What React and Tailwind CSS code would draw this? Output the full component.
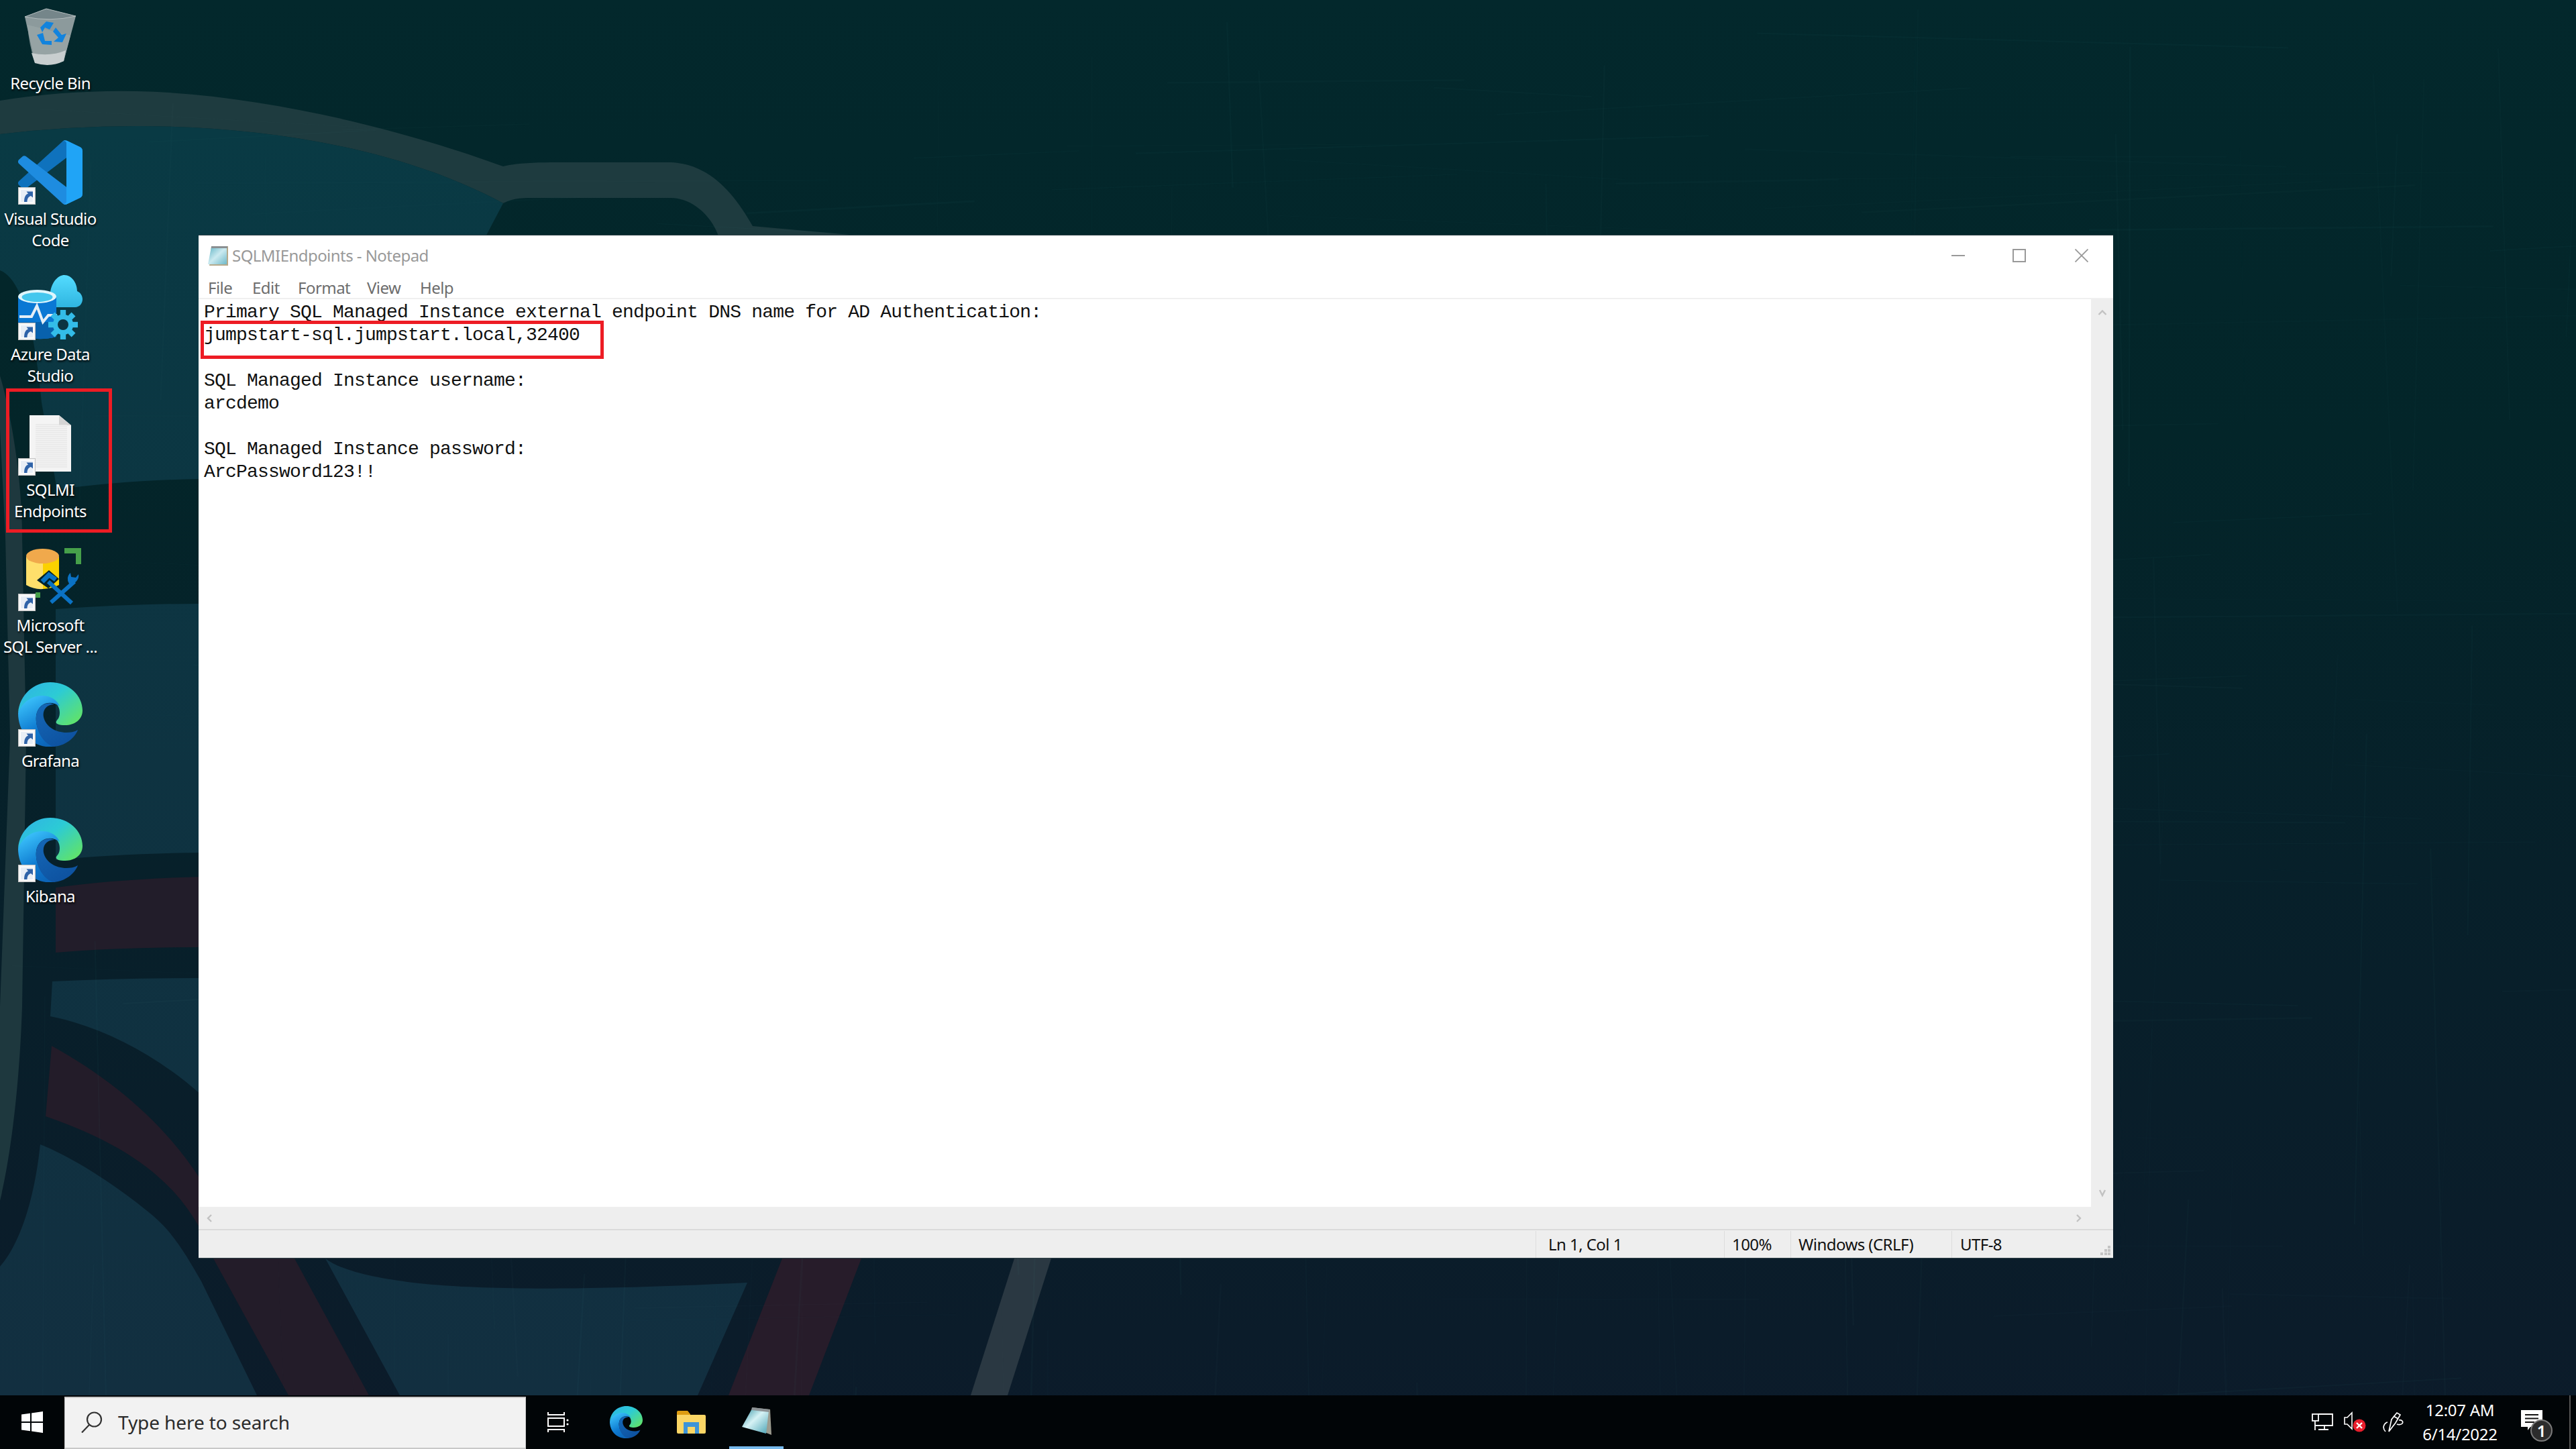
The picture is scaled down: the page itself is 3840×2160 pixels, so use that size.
import React from "react";

const UI_FONT = "font-['Noto_Sans',sans-serif]";

// faint scratchy grid of the wallpaper
const seeded = (seed) => () => {
  seed = (seed * 16807) % 2147483647;
  return seed / 2147483647;
};
const rnd = seeded(4711);
const scratches = Array.from({ length: 220 }, (_, i) => {
  const x = rnd() * 3840;
  const y = rnd() * 2080;
  const len = 200 + rnd() * 800;
  const tilt = (rnd() - 0.5) * 0.12;
  const vertical = i % 2 === 0;
  return {
    x1: x,
    y1: y,
    x2: vertical ? x + tilt * len : x + len,
    y2: vertical ? y + len : y + tilt * len,
    o: 0.012 + rnd() * 0.022,
    w: 1 + rnd() * 2,
  };
});

const Wallpaper = () => (
  <svg className="absolute inset-0" width="3840" height="2160" viewBox="0 0 3840 2160">
    <defs>
      <linearGradient id="wpBase" x1="0" y1="0" x2="0" y2="1">
        <stop offset="0" stopColor="#03282c" />
        <stop offset="0.3" stopColor="#032529" />
        <stop offset="0.6" stopColor="#07202a" />
        <stop offset="1" stopColor="#0c1b2a" />
      </linearGradient>
      <linearGradient id="wpTeal" gradientUnits="userSpaceOnUse" x1="0" y1="200" x2="0" y2="2080">
        <stop offset="0" stopColor="#093a44" />
        <stop offset="0.5" stopColor="#0e3341" />
        <stop offset="1" stopColor="#122f40" />
      </linearGradient>
    </defs>
    <rect width="3840" height="2160" fill="url(#wpBase)" />
    {/* arc band at the top left */}
    <path
      d="M0 150 Q100 134 204 136 C400 140 620 200 750 248 C770 243 800 242 830 242 L1000 242 C1060 245 1095 290 1122 337 L1290 352 L1071 352 C1060 320 1030 295 1000 295 L790 295 C770 295 760 298 750 303 C600 222 400 188 204 188 Q100 188 0 200 Z"
      fill="#1e3b3f"
    />
    {/* teal panels */}
    <path
      d="M0 200 Q100 188 204 188 C400 188 600 222 750 303 L720 360 L720 700 L296 714 Q180 716 85 730 L62 600 Q45 420 0 403 Z"
      fill="url(#wpTeal)"
    />
    <path d="M83 908 Q200 900 300 900 L300 1271 Q180 1272 83 1282 Z" fill="url(#wpTeal)" />
    <path
      d="M78 1463 Q180 1458 300 1458 L300 1632 C230 1570 150 1530 75 1515 Z"
      fill="url(#wpTeal)"
    />
    <path
      d="M60 1706 C120 1730 190 1780 230 1814 C260 1840 280 1875 300 1910 L383 2080 L0 2080 L0 1888 C25 1860 50 1800 60 1706 Z"
      fill="url(#wpTeal)"
    />
    <path
      d="M485 1876 C510 1895 560 1905 615 1912 C700 1922 850 1925 1114 1912 L1040 2080 L596 2080 Z"
      fill="url(#wpTeal)"
    />
    {/* maroon ribbons */}
    <path d="M83 1323 Q180 1310 300 1307 L300 1412 Q180 1412 83 1420 Z" fill="#221d2a" />
    <path
      d="M77 1559 C170 1610 250 1680 300 1760 L439 1876 L550 2080 L430 2080 L318 1876 C280 1770 200 1710 68 1664 Z"
      fill="#231c29"
    />
    <path d="M1166 1876 L1284 1876 L1206 2080 L1086 2080 Z" fill="#271c2a" />
    {/* grey stripes */}
    <path
      d="M0 560 C12 600 33 700 33 800 L39 1100 L33 1500 C28 1650 10 1750 0 1790 L0 1500 L15 1100 L8 800 L0 640 Z"
      fill="#1e383e"
    />
    <path d="M1512 1876 L1567 1876 L1502 2080 L1447 2080 Z" fill="#2a3842" />
    {scratches.map((s, i) => (
      <line
        key={i}
        x1={s.x1}
        y1={s.y1}
        x2={s.x2}
        y2={s.y2}
        stroke="#6fb0b0"
        strokeOpacity={s.o}
        strokeWidth={s.w}
      />
    ))}
  </svg>
);

const ShortcutArrow = () => (
  <svg className="absolute left-0 bottom-0" width="26" height="26" viewBox="0 0 26 26">
    <rect x="0.5" y="0.5" width="25" height="25" fill="#f4f4f4" stroke="#c4c4c4" />
    <rect x="3" y="3" width="20" height="20" fill="#fff" />
    <path d="M4 4H22V22H4Z" fill="#e8eef6" />
    <path
      d="M9 22C9 15 11 11 15 9.5L12.5 6.5H22V15.5L19 13C15.5 14 13.5 17 13.5 22Z"
      fill="#2f63a8"
    />
  </svg>
);

const RecycleBin = () => (
  <svg width="96" height="96" viewBox="0 0 96 96">
    <path d="M10 18 L42 6 L86 17 L68 84 Q50 92 25 86 Z" fill="#8c9a9c" />
    <path d="M10 18 L42 6 L86 17 Q48 26 10 18 Z" fill="#75868a" stroke="#b3bcbd" strokeWidth="1" />
    <path d="M14 30 Q16 60 25 86 Q50 92 68 84 L78 46 Z" fill="#9aa7a8" opacity="0.7" />
    <path d="M20 72 Q48 78 71 68 L68 84 Q48 94 25 87 Z" fill="#c8cecf" />
    <g fill="#1283dd">
      <path d="M33 34 L42 25 L53 27 L47 37 L40 34 L36 41 Z" />
      <path d="M28 45 L37 42 L40 54 L50 54 L50 60 L36 59 Z" />
      <path d="M56 34 L65 45 L72 43 L66 56 L53 55 L60 49 L52 40 Z" />
    </g>
  </svg>
);

const VSCode = () => (
  <svg width="96" height="96" viewBox="0 0 100 100">
    <path
      d="M96.4614 10.7962L75.8569 0.875542C73.4719 -0.272773 70.6217 0.211611 68.75 2.08333L1.29858 63.5832C-0.515693 65.2373 -0.513607 68.0937 1.30308 69.7452L6.81272 74.754C8.29793 76.1042 10.5347 76.2036 12.1338 74.9905L93.3609 13.3699C96.086 11.3026 100 13.2462 100 16.6667V16.4275C100 14.0265 98.6246 11.8378 96.4614 10.7962Z"
      fill="#0f72bd"
    />
    <path
      d="M96.4614 89.2038L75.8569 99.1245C73.4719 100.273 70.6217 99.7884 68.75 97.9167L1.29858 36.4168C-0.515693 34.7627 -0.513607 31.9063 1.30308 30.2548L6.81272 25.246C8.29793 23.8958 10.5347 23.7964 12.1338 25.0095L93.3609 86.6301C96.086 88.6974 100 86.7538 100 83.3333V83.5725C100 85.9735 98.6246 88.1622 96.4614 89.2038Z"
      fill="#1e8ce0"
    />
    <path
      d="M75.8578 99.1263C73.4721 100.274 70.6219 99.7885 68.75 97.9166C71.0564 100.223 75 98.5895 75 95.3278V4.67213C75 1.41039 71.0564 -0.223106 68.75 2.08329C70.6219 0.211402 73.4721 -0.273666 75.8578 0.873633L96.4587 10.7807C98.6234 11.8217 100 14.0112 100 16.4132V83.5871C100 85.9891 98.6234 88.1786 96.4586 89.2196L75.8578 99.1263Z"
      fill="#20a4f6"
    />
  </svg>
);

const Gear = ({ cx, cy, r, fill }) => (
  <g fill={fill}>
    {[0, 45, 90, 135, 180, 225, 270, 315].map((a) => (
      <rect
        key={a}
        x={cx - r * 0.22}
        y={cy - r - 3}
        width={r * 0.44}
        height={r * 0.5}
        transform={`rotate(${a} ${cx} ${cy})`}
      />
    ))}
    <circle cx={cx} cy={cy} r={r * 0.8} />
  </g>
);

const AzureData = () => (
  <svg width="96" height="97" viewBox="0 0 96 97">
    <defs>
      <linearGradient id="adsCloud" x1="0" y1="0" x2="0" y2="1">
        <stop offset="0" stopColor="#54dcff" />
        <stop offset="1" stopColor="#2fb5e0" />
      </linearGradient>
    </defs>
    <g fill="url(#adsCloud)">
      <path d="M34 48 C33 36 40 28 48 26 C50 10 60 0 69 0 C80 0 88 12 88 24 C93 26 96 31 96 36 C96 43 91 48 85 48 Z" />
    </g>
    <path d="M0 32 V88 Q25 100 57 92 V32 Z" fill="#0a78d4" />
    <path d="M0 88 Q25 100 57 92 V70 L0 70 Z" fill="#0861ad" />
    <ellipse cx="28.5" cy="32" rx="28.5" ry="10" fill="#dff6fd" />
    <ellipse cx="28.5" cy="33" rx="23" ry="7" fill="#45c7ee" />
    <path
      d="M2 62 L20 62 L28 46 L37 70 L45 60 L58 60"
      fill="none"
      stroke="#e4eef6"
      strokeWidth="4"
    />
    <Gear cx={67} cy={74} r={19} fill="#33bce8" />
    <circle cx="67" cy="74" r="8" fill="#0b3442" />
  </svg>
);

const TextDoc = () => (
  <svg width="62" height="84" viewBox="0 0 62 84">
    <path d="M0 0 H44 L62 15 V84 H0 Z" fill="#f4f4f4" />
    <path d="M44 0 L62 15 H44 Z" fill="#d4d4d4" />
    {Array.from({ length: 22 }, (_, i) => (
      <line key={i} x1="9" x2="56" y1={14 + i * 3} y2={14 + i * 3} stroke="#e0e0e0" strokeWidth="1" />
    ))}
  </svg>
);

const SsmsIcon = () => (
  <svg width="82" height="86" viewBox="0 0 82 86">
    <path d="M57 0 H82 V24 H74 V8 H57 Z" fill="#46a04a" />
    <path d="M0 13 V55 Q12 62 25 61 V13 Z" fill="#ffdf6b" />
    <path d="M25 13 V61 Q40 60 49 55 V13 Z" fill="#fbd100" />
    <ellipse cx="24.5" cy="12" rx="24.5" ry="11" fill="#f0a94c" />
    <path d="M24 67 V75 H17 V67 Z" fill="#46a04a" transform="translate(-3 -1)" />
    <path d="M16 48 L34 33 L49 46 L38 56 L33 60 Z" fill="#04222a" />
    <g stroke="#0b72c4" strokeWidth="6" fill="none">
      <path d="M37 81 L72 50" />
      <path d="M68 82 L33 50" />
      <path d="M24 50 L34 40 L44 47" strokeWidth="7" />
    </g>
    <path d="M64 53 A12 12 0 0 1 66 37 L67 43 L74 44 L78 39 A12 12 0 0 1 64 53 Z" fill="#0b72c4" />
  </svg>
);

const EdgeIcon = ({ size = 96, id = "e", height }) => (
  <svg width={size} height={height || size} viewBox="0 0 96 96" preserveAspectRatio="none">
    <defs>
      <linearGradient id={`${id}Top`} x1="0" y1="0" x2="1" y2="0.8">
        <stop offset="0" stopColor="#2fb1e6" />
        <stop offset="0.5" stopColor="#2ccbd5" />
        <stop offset="1" stopColor="#5fe26c" />
      </linearGradient>
      <linearGradient id={`${id}Left`} x1="0.2" y1="0.1" x2="0.6" y2="1">
        <stop offset="0" stopColor="#38bdf8" />
        <stop offset="0.6" stopColor="#0e7ad0" />
        <stop offset="1" stopColor="#0c65b8" />
      </linearGradient>
      <linearGradient id={`${id}Wave`} x1="0.2" y1="0" x2="0.8" y2="1">
        <stop offset="0" stopColor="#1466b5" />
        <stop offset="1" stopColor="#0d509e" />
      </linearGradient>
    </defs>
    <path
      d="M0 46 C2 18 24 0 48 0 C76 0 96 20 96 42 C96 56 84 64 70 64 C61 64 55 62 57 58 C59 55 62 53 62 45 C62 32 50 24 36 24 C20 24 6 32 0 46 Z"
      fill={`url(#${id}Top)`}
    />
    <path
      d="M0 46 C6 30 20 20 36 20 C48 20 58 26 62 36 C52 27 30 28 27 50 C25 68 36 88 56 96 C24 100 0 78 0 46 Z"
      fill={`url(#${id}Left)`}
    />
    <path
      d="M27 50 C29 33 44 28 54 33 C44 33 36 40 38 52 C41 66 56 75 72 75 C78 75 84 74 89 71 C84 84 70 95 52 96 C36 90 25 70 27 50 Z"
      fill={`url(#${id}Wave)`}
    />
  </svg>
);

const desktopIcons = [
  { label: ["Recycle Bin"], art: <RecycleBin />, shortcut: false, box: "items-center justify-center" },
  { label: ["Visual Studio", "Code"], art: <VSCode />, shortcut: true, box: "items-center justify-center" },
  { label: ["Azure Data", "Studio"], art: <AzureData />, shortcut: true, box: "items-end justify-center" },
  { label: ["SQLMI", "Endpoints"], art: <TextDoc />, shortcut: true, box: "items-center justify-center" },
  { label: ["Microsoft", "SQL Server ..."], art: <SsmsIcon />, shortcut: true, box: "items-center justify-center pl-[10px] pb-[6px]" },
  { label: ["Grafana"], art: <EdgeIcon id="graf" />, shortcut: true, box: "items-center justify-center" },
  { label: ["Kibana"], art: <EdgeIcon id="kib" />, shortcut: true, box: "items-center justify-center" },
];

const DesktopIcon = ({ item }) => (
  <div className="h-[202px] w-[150px] pt-[7px] flex flex-col items-center">
    <div className={`relative w-24 h-24 flex shrink-0 ${item.box}`}>
      {item.art}
      {item.shortcut && <ShortcutArrow />}
    </div>
    <div className="mt-[5px] text-white text-[24px] leading-[32px] tracking-[-0.6px] text-center whitespace-nowrap [text-shadow:1px_2px_3px_rgba(0,0,0,0.95)]">
      {item.label.map((l) => (
        <div key={l}>{l}</div>
      ))}
    </div>
  </div>
);

const NotepadGlyph = ({ w, h, id }) => (
  <svg width={w} height={h} viewBox="0 0 32 32">
    <defs>
      <linearGradient id={id} x1="0" y1="0" x2="1" y2="1">
        <stop offset="0" stopColor="#5fb3c4" />
        <stop offset="0.5" stopColor="#cbeaf0" />
        <stop offset="1" stopColor="#6eb8c8" />
      </linearGradient>
    </defs>
    <path d="M6 2 H31 V31 H3 Z" fill="#b6a98a" />
    <path d="M6 3 H29 V29 H1 Z" fill={`url(#${id})`} />
    <path d="M6 2 H30 V5 H6 Z" fill="#8a8f92" />
  </svg>
);

const menuItems = [
  ["File", "w-[66px]"],
  ["Edit", "w-[68px]"],
  ["Format", "w-[103px]"],
  ["View", "w-[79px]"],
  ["Help", ""],
];

const lines = [
  "Primary SQL Managed Instance external endpoint DNS name for AD Authentication:",
  "jumpstart-sql.jumpstart.local,32400",
  "",
  "SQL Managed Instance username:",
  "arcdemo",
  "",
  "SQL Managed Instance password:",
  "ArcPassword123!!",
];

const statusCells = [
  ["Ln 1, Col 1", "w-[281px] pl-[18px]"],
  ["100%", "w-[99px] pl-[11px]"],
  ["Windows (CRLF)", "w-[240px] pl-[11px]"],
  ["UTF-8", "w-[241px] pl-[12px]"],
];

const Chevron = ({ d }) => (
  <svg width="14" height="14" viewBox="0 0 14 14" className="shrink-0">
    <path d={d} fill="none" stroke="#c2c2c2" strokeWidth="2.4" />
  </svg>
);

const NotepadWindow = () => (
  <div className="absolute left-[296px] top-[350px] w-[2854px] h-[1526px] flex flex-col bg-white border-t border-b border-[#2f4046]">
    <div className="h-[63px] pb-[4px] flex items-center shrink-0">
      <div className="ml-[13px] w-[37px]">
        <NotepadGlyph w={32} h={32} id="titleNote" />
      </div>
      <span className="text-[24px] text-[#999999] tracking-[-0.55px]">SQLMIEndpoints - Notepad</span>
      <div className="ml-auto flex items-center h-full text-[#999999]">
        <svg width="20" height="20" viewBox="0 0 20 20" className="mr-[71px]">
          <rect y="9" width="20" height="2" fill="#999999" />
        </svg>
        <svg width="20" height="20" viewBox="0 0 20 20" className="mr-[73px]">
          <rect x="1" y="1" width="18" height="18" fill="none" stroke="#999999" strokeWidth="2" />
        </svg>
        <svg width="20" height="20" viewBox="0 0 20 20" className="mr-[37px]">
          <path d="M0.5 0.5L19.5 19.5M19.5 0.5L0.5 19.5" stroke="#999999" strokeWidth="1.8" />
        </svg>
      </div>
    </div>
    <div className="h-[30px] flex items-center pl-[14px] text-[24px] text-[#6d6d6d] tracking-[-0.55px] shrink-0">
      {menuItems.map(([label, width]) => (
        <span key={label} className={width}>
          {label}
        </span>
      ))}
    </div>
    <div className="h-[2px] bg-[#f0f0f0] shrink-0" />
    <div className="flex flex-1 min-h-0 pt-0">
      <div className="flex-1 bg-white pt-[3px] pl-2 font-['Liberation_Mono',monospace] text-[28px] leading-[34px] tracking-[-0.8px] text-[#111111] whitespace-pre">
        {lines.map((l, i) => (
          <div key={i} className="h-[34px]">
            {l}
          </div>
        ))}
      </div>
      <div className="w-[33px] bg-[#eeeeee] flex flex-col items-center justify-between py-[13px]">
        <Chevron d="M1.5 10L7 4.5L12.5 10" />
        <Chevron d="M3 2L7 10L11 2" />
      </div>
    </div>
    <div className="h-[33px] bg-[#eeeeee] flex items-center justify-between px-[10px] pr-[45px] shrink-0">
      <Chevron d="M9 2L4 7L9 12" />
      <Chevron d="M5 2L10 7L5 12" />
    </div>
    <div className="h-[43px] bg-[#eeeeee] border-t-2 border-[#dadada] flex items-center justify-end text-[24px] text-[#111111] tracking-[-0.55px] shrink-0 relative">
      {statusCells.map(([label, cls]) => (
        <div key={label} className={`h-[40px] flex items-center border-l border-[#dddddd] ${cls}`}>
          {label}
        </div>
      ))}
      <svg className="absolute right-[4px] bottom-[3px]" width="16" height="16" viewBox="0 0 16 16">
        <path d="M12 1h4v4h-4zM7 6h4v4H7zM12 6h4v4h-4zM1 11h4v4H1zM7 11h4v4H7zM12 11h4v4h-4z" fill="#c4c4c4" />
      </svg>
    </div>
    {/* annotation round the endpoint */}
    <div className="absolute left-[3px] top-[127px] w-[601px] h-[57px] border-[5px] border-[#ed1c24]" />
  </div>
);

const WindowsLogo = () => (
  <svg width="32" height="32" viewBox="0 0 32 32" fill="#ffffff">
    <path d="M0 4.6L13 2.8V15H0ZM15 2.5L32 0V15H15ZM0 17H13V29.2L0 27.4ZM15 17H32V32L15 29.5Z" />
  </svg>
);

const SearchGlass = () => (
  <svg width="32" height="32" viewBox="0 0 32 32" fill="none" stroke="#333333" strokeWidth="2.2">
    <circle cx="19.5" cy="12" r="10.5" />
    <path d="M12 20L1 31.5" />
  </svg>
);

const TaskView = () => (
  <svg width="32" height="30" viewBox="0 0 32 30" fill="none" stroke="#ffffff" strokeWidth="2">
    <path d="M1 0V4H25V0" />
    <rect x="1" y="9" width="24" height="12" />
    <path d="M1 30V26H25V30" />
    <circle cx="30" cy="12" r="1.6" fill="#ffffff" stroke="none" />
    <circle cx="30" cy="18" r="1.6" fill="#ffffff" stroke="none" />
  </svg>
);

const FolderIcon = () => (
  <svg width="43" height="34" viewBox="0 0 43 34">
    <path d="M0 2 Q0 0 2 0 H16 L20 5 V9 H0 Z" fill="#de9d12" />
    <path d="M0 6 H41 Q43 6 43 8 V32 Q43 34 41 34 H2 Q0 34 0 32 Z" fill="#fbd665" />
    <path d="M10 17 H33 V34 H27 V24 H16 V34 H10 Z" fill="#3d94d8" />
  </svg>
);

const TaskbarNotepad = () => (
  <svg width="47" height="42" viewBox="0 0 47 42">
    <defs>
      <linearGradient id="barNote" x1="0" y1="0" x2="1" y2="1">
        <stop offset="0" stopColor="#2c8ea0" />
        <stop offset="0.45" stopColor="#d6f2f5" />
        <stop offset="1" stopColor="#4aa3b5" />
      </linearGradient>
    </defs>
    <path d="M17 1 L44 4 L46 42 L36 38 Z" fill="#9b9b8f" />
    <path d="M17 3 L42 6 L38 40 L2 30 Z" fill="url(#barNote)" />
    <path d="M17 1 L43 4 L42 8 L16 5 Z" fill="#8d9396" />
  </svg>
);

const TrayNetwork = () => (
  <svg width="32" height="26" viewBox="0 0 32 26" fill="none" stroke="#ffffff" strokeWidth="1.8">
    <path d="M10 1H31V18H5" />
    <rect x="1" y="1" width="9" height="10" />
    <path d="M5 11V25" />
    <path d="M19 18V24M10 24H25" />
  </svg>
);

const TraySpeaker = () => (
  <svg width="35" height="32" viewBox="0 0 35 32">
    <path d="M1 9H5L12 2V26L5 19H1Z" fill="none" stroke="#ffffff" strokeWidth="1.6" />
    <circle cx="23" cy="21" r="9.5" fill="#e81e2c" />
    <path d="M19 17L27 25M27 17L19 25" stroke="#ffffff" strokeWidth="2.4" />
  </svg>
);

const TrayPen = () => (
  <svg width="32" height="32" viewBox="0 0 32 32" fill="none" stroke="#ffffff" strokeWidth="1.7">
    <path d="M10 30L14 12L22 2L27 5L20 17Z" />
    <path d="M17 7L24 11" />
    <path d="M8 16C2 18 0 25 5 30" />
    <path d="M25 13C29 12 32 15 30 18C28 20 24 20 22 19" />
  </svg>
);

const TrayNotification = () => (
  <div className="relative w-[46px] h-[46px]">
    <svg width="32" height="30" viewBox="0 0 32 30" className="absolute left-0 top-0">
      <path d="M0 0H32V25H14L10 30V25H0Z" fill="#ffffff" />
      <path d="M6 7H26M6 12.5H26M6 18H20" stroke="#111111" strokeWidth="2" />
    </svg>
    <div className="absolute left-[14px] top-[14px] w-[33px] h-[33px] rounded-full bg-[#2c2c2c] border-2 border-[#7a7a7a] flex items-center justify-center text-white text-[24px] font-semibold leading-none">
      1
    </div>
  </div>
);

const Taskbar = () => (
  <div className="h-20 shrink-0 bg-[#010507] flex items-stretch relative">
    <div className="w-24 flex items-center justify-center">
      <WindowsLogo />
    </div>
    <div className="w-[688px] mt-[2px] pb-[2px] bg-[#f2f2f2] border-t-2 border-b-2 border-x border-[#c8c8c8] flex items-center pl-[24px]">
      <SearchGlass />
      <span className="ml-[23px] text-[28px] text-[#2b2b2b] tracking-[-0.1px] whitespace-nowrap">Type here to search</span>
    </div>
    <div className="w-[96px] flex items-center justify-center">
      <TaskView />
    </div>
    <div className="w-[5px]" />
    <div className="w-[97px] flex items-center justify-center">
      <EdgeIcon size={49} id="bar" height={48} />
    </div>
    <div className="w-[97px] flex items-center justify-center">
      <FolderIcon />
    </div>
    <div className="w-[97px] flex items-center justify-center border-b-4 border-transparent relative">
      <TaskbarNotepad />
      <div className="absolute bottom-[-4px] left-[8px] w-[81px] h-1 bg-[#76b9ed]" />
    </div>
    <div className="ml-auto flex items-center">
      <TrayNetwork />
      <div className="ml-4">
        <TraySpeaker />
      </div>
      <div className="ml-[22px]">
        <TrayPen />
      </div>
      <div className="ml-[24px] w-[120px] text-center text-white text-[24px] leading-[36px] tracking-[-0.3px]">
        <div>12:07 AM</div>
        <div>6/14/2022</div>
      </div>
      <div className="ml-[31px] mt-[10px]">
        <TrayNotification />
      </div>
      <div className="ml-[26px] mr-2 w-[2px] h-full bg-[#555555]" />
    </div>
  </div>
);

export default function App() {
  return (
    <div className={`relative w-[3840px] h-[2160px] overflow-hidden flex flex-col ${UI_FONT}`}>
      <Wallpaper />
      <div className="relative flex-1 min-h-0">
        <div className="flex flex-col w-[150px]">
          {desktopIcons.map((item) => (
            <DesktopIcon key={item.label[0]} item={item} />
          ))}
        </div>
        <div className="absolute left-[9px] top-[579px] w-[158px] h-[215px] border-[5px] border-[#ed1c24]" />
        <NotepadWindow />
      </div>
      <Taskbar />
    </div>
  );
}
